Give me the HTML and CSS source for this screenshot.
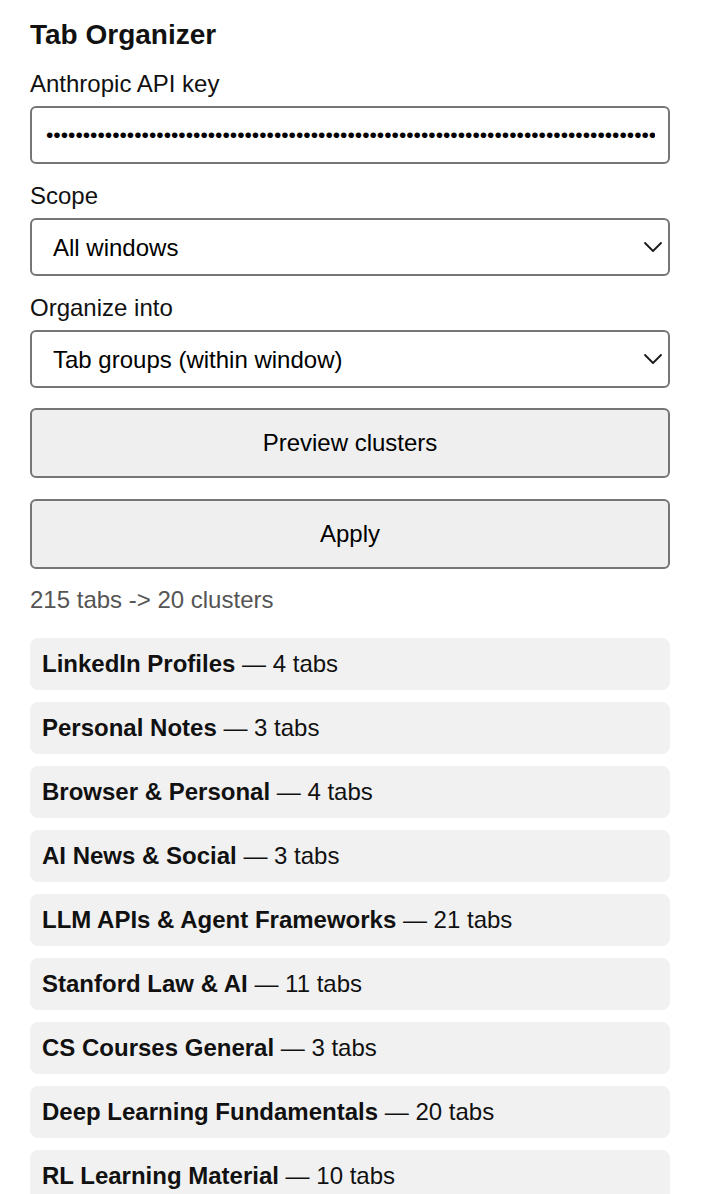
FILE: index.html
```html
<!DOCTYPE html>
<html lang="en">
<head>
<meta charset="utf-8">
<title>Tab Organizer</title>
<link rel="stylesheet" href="styles.css">
</head>
<body>
<main class="popup">
  <h1 class="title">Tab Organizer</h1>

  <div class="field">
    <label class="label" for="key">Anthropic API key</label>
    <input class="text-input" id="key" type="password" value="sk-ant-api03-xxxxxxxxxxxxxxxxxxxxxxxxxxxxxxxxxxxxxxxxxxxxxxxxxxxxxxxxxxxxxxxxxxxxxxxxxxxxxxxxxxxxxxxxxxxx">
  </div>

  <div class="field">
    <label class="label" for="scope">Scope</label>
    <div class="select-wrap">
      <select class="select" id="scope">
        <option>All windows</option>
        <option>Current window</option>
      </select>
      <svg class="chevron" width="18" height="10" viewBox="0 0 18 10" aria-hidden="true"><path d="M1 1 L9 9 L17 1" fill="none" stroke="#1a1a1a" stroke-width="1.8" stroke-linecap="round" stroke-linejoin="round"/></svg>
    </div>
  </div>

  <div class="field">
    <label class="label" for="mode">Organize into</label>
    <div class="select-wrap">
      <select class="select" id="mode">
        <option>Tab groups (within window)</option>
        <option>Separate windows</option>
      </select>
      <svg class="chevron" width="18" height="10" viewBox="0 0 18 10" aria-hidden="true"><path d="M1 1 L9 9 L17 1" fill="none" stroke="#1a1a1a" stroke-width="1.8" stroke-linecap="round" stroke-linejoin="round"/></svg>
    </div>
  </div>

  <div class="actions">
    <button class="btn" type="button">Preview clusters</button>
    <button class="btn" type="button">Apply</button>
  </div>

  <p class="status">215 tabs -&gt; 20 clusters</p>

  <ul class="clusters">
    <li class="cluster"><b>LinkedIn Profiles</b> — 4 tabs</li>
    <li class="cluster"><b>Personal Notes</b> — 3 tabs</li>
    <li class="cluster"><b>Browser &amp; Personal</b> — 4 tabs</li>
    <li class="cluster"><b>AI News &amp; Social</b> — 3 tabs</li>
    <li class="cluster"><b>LLM APIs &amp; Agent Frameworks</b> — 21 tabs</li>
    <li class="cluster"><b>Stanford Law &amp; AI</b> — 11 tabs</li>
    <li class="cluster"><b>CS Courses General</b> — 3 tabs</li>
    <li class="cluster"><b>Deep Learning Fundamentals</b> — 20 tabs</li>
    <li class="cluster"><b>RL Learning Material</b> — 10 tabs</li>
  </ul>
</main>
</body>
</html>
```

FILE: styles.css
```css
* {
  box-sizing: border-box;
}

html, body {
  margin: 0;
  padding: 0;
  background: #ffffff;
}

body {
  font-family: "Liberation Sans", Arial, Helvetica, sans-serif;
  color: #111111;
}

.popup {
  width: 640px;
  margin-left: 30px;
  padding-top: 19px;
  display: flex;
  flex-direction: column;
}

.title {
  margin: 0 0 19px;
  font-size: 28px;
  line-height: 32px;
  font-weight: 700;
  color: #111111;
}

.field {
  display: flex;
  flex-direction: column;
  margin-bottom: 18px;
}

.label {
  font-size: 24px;
  line-height: 28px;
  margin-bottom: 8px;
  color: #111111;
}

.text-input {
  height: 58px;
  width: 100%;
  border: 2px solid #767676;
  border-radius: 6px;
  padding: 0 13px 0 14px;
  font-family: "Liberation Sans", Arial, sans-serif;
  font-size: 21px;
  color: #000000;
  background: #ffffff;
  outline: none;
}

.select-wrap {
  position: relative;
}

.select {
  display: block;
  width: 100%;
  height: 58px;
  border: 2px solid #767676;
  border-radius: 6px;
  padding: 0 40px 0 21px;
  font-family: "Liberation Sans", Arial, sans-serif;
  font-size: 24px;
  color: #000000;
  background: #ffffff;
  -webkit-appearance: none;
  appearance: none;
  outline: none;
}

.chevron {
  position: absolute;
  right: 8px;
  top: 24px;
  pointer-events: none;
}

.actions {
  display: flex;
  flex-direction: column;
  gap: 21px;
  margin-top: 2px;
}

.btn {
  height: 70px;
  width: 100%;
  border: 2px solid #767676;
  border-radius: 6px;
  background: #efefef;
  font-family: "Liberation Sans", Arial, sans-serif;
  font-size: 24px;
  color: #000000;
  padding: 0;
}

.status {
  margin: 17px 0 0;
  font-size: 24px;
  line-height: 28px;
  color: #555555;
}

.clusters {
  list-style: none;
  margin: 24px 0 0;
  padding: 0;
  display: flex;
  flex-direction: column;
  gap: 12px;
}

.cluster {
  background: #f1f1f1;
  border-radius: 8px;
  padding: 12px;
  font-size: 24px;
  line-height: 28px;
  color: #111111;
}

.cluster b {
  font-weight: 700;
}
```
